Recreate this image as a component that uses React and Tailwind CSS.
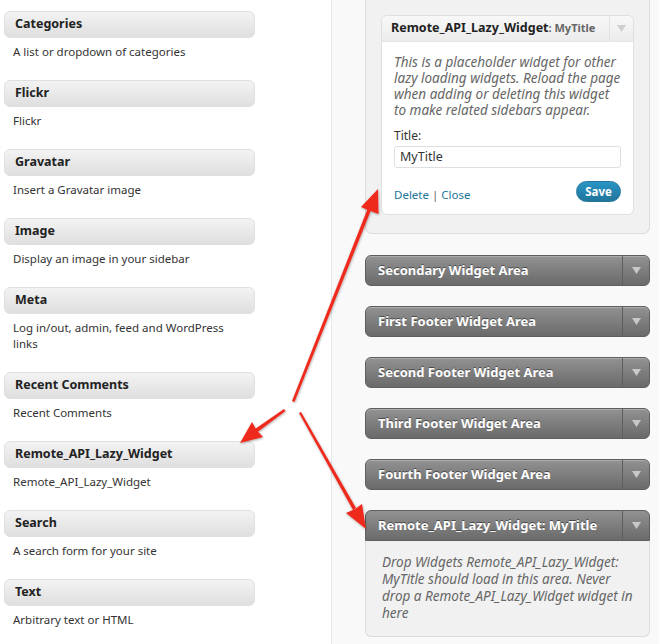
import React from "react";

const leftWidgets = [
  { t: "Categories", d: ["A list or dropdown of categories"] },
  { t: "Flickr", d: ["Flickr"] },
  { t: "Gravatar", d: ["Insert a Gravatar image"] },
  { t: "Image", d: ["Display an image in your sidebar"] },
  { t: "Meta", d: ["Log in/out, admin, feed and WordPress", "links"] },
  { t: "Recent Comments", d: ["Recent Comments"] },
  { t: "Remote_API_Lazy_Widget", d: ["Remote_API_Lazy_Widget"] },
  { t: "Search", d: ["A search form for your site"] },
  { t: "Text", d: ["Arbitrary text or HTML"] },
];

const bars = [
  "Secondary Widget Area",
  "First Footer Widget Area",
  "Second Footer Widget Area",
  "Third Footer Widget Area",
  "Fourth Footer Widget Area",
];

function Tri({ className }) {
  return (
    <svg width="9" height="7" viewBox="0 0 9 7" className={className}>
      <polygon points="0,0 9,0 4.5,7" fill="currentColor" />
    </svg>
  );
}

function DarkBar({ title }) {
  return (
    <div className="flex h-[31px] rounded-[6px] border border-[#5f5f5f] bg-gradient-to-b from-[#929292] to-[#6a6a6a] shadow-[inset_0_1px_0_rgba(255,255,255,0.25)]">
      <div className="flex flex-1 items-center pl-[12px] text-[13px] font-bold text-white [text-shadow:0_-1px_0_rgba(0,0,0,0.45)]">
        {title}
      </div>
      <div className="flex w-[27px] items-center justify-center border-l border-[#5e5e5e] text-[#c8c8c8]">
        <Tri />
      </div>
    </div>
  );
}

export default function App() {
  return (
    <div className="relative flex h-[644px] w-[659px] overflow-hidden bg-white font-['Noto_Sans',sans-serif]">
      {/* left column */}
      <div className="w-[332px] shrink-0 border-r border-[#e6e6e6] bg-white pl-[4px] pt-[11px]">
        {leftWidgets.map((w) => (
          <div key={w.t} className="mb-[20px] w-[251px]">
            <div className="flex h-[27px] items-center rounded-[6px] border border-[#e0e0e0] bg-gradient-to-b from-[#f3f3f3] to-[#dfdfdf] pl-[10px] text-[12.5px] font-bold text-[#222]">
              {w.t}
            </div>
            <div className="mt-[6px] pl-[9px] text-[11.5px] leading-[16px] text-[#333]">
              {w.d.map((l) => (
                <div key={l}>{l}</div>
              ))}
            </div>
          </div>
        ))}
      </div>

      {/* right column */}
      <div className="flex-1 bg-[#f9f9f9] pl-[33px] pr-[9px]">
        <div className="-mt-[10px] rounded-b-[7px] border border-t-0 border-[#dcdcdc] bg-[#f1f1f1] px-[15px] pb-[18px] pt-[25px]">
          <div className="rounded-[6px] border border-[#dfdfdf] bg-white">
            <div className="flex h-[26px] rounded-t-[6px] border-b border-[#e6e6e6] bg-gradient-to-b from-[#f8f8f8] to-[#ececec]">
              <div className="flex flex-1 items-center pl-[9px] text-[12.5px] font-bold text-[#222]">
                Remote_API_Lazy_Widget<span className="text-[11px] text-[#666]">: MyTitle</span>
              </div>
              <div className="flex w-[24px] items-center justify-center border-l border-[#e2e2e2] text-[#cfcfcf]">
                <Tri />
              </div>
            </div>
            <div className="px-[12px] pb-[11px] pt-[12px]">
              <div className="text-[13.5px] italic leading-[16px] text-[#666]">
                This is a placeholder widget for other lazy loading widgets. Reload the page when adding or deleting this widget to make related sidebars appear.
              </div>
              <div className="mt-[10px] text-[12px] leading-[16px] text-[#333]">Title:</div>
              <div className="mt-[2px] flex h-[22px] items-center rounded-[3px] border border-[#dfdfdf] bg-white pl-[5px] text-[12.5px] text-[#333]">
                MyTitle
              </div>
              <div className="mt-[12px] flex items-center justify-between">
                <div className="pt-[6px] text-[11.5px] text-[#21759b]">
                  Delete <span className="text-[#666]">|</span> Close
                </div>
                <div className="flex h-[21px] w-[45px] items-center justify-center rounded-full border border-[#21759b] bg-gradient-to-b from-[#2a95c5] to-[#21759b] text-[11.5px] font-bold text-white">
                  Save
                </div>
              </div>
            </div>
          </div>
        </div>

        <div className="mt-[21px] flex flex-col gap-[20px]">
          {bars.map((b) => (
            <DarkBar key={b} title={b} />
          ))}
          <div>
            <div className="flex h-[31px] rounded-t-[6px] border border-[#5f5f5f] bg-gradient-to-b from-[#929292] to-[#6a6a6a]">
              <div className="flex flex-1 items-center pl-[12px] text-[13px] font-bold text-white [text-shadow:0_-1px_0_rgba(0,0,0,0.45)]">
                Remote_API_Lazy_Widget: MyTitle
              </div>
              <div className="flex w-[27px] items-center justify-center border-l border-[#5e5e5e] text-[#c8c8c8]">
                <Tri />
              </div>
            </div>
            <div className="h-[96px] rounded-b-[6px] border border-t-0 border-[#dcdcdc] bg-[#f1f1f1] pl-[16px] pr-[14px] pt-[13px] text-[13.5px] italic leading-[17px] text-[#666]">
              Drop Widgets Remote_API_Lazy_Widget: MyTitle should load in this area. Never drop a Remote_API_Lazy_Widget widget in here
            </div>
          </div>
        </div>
      </div>

      {/* annotation arrows */}
      <svg className="pointer-events-none absolute left-0 top-0" width="659" height="644" viewBox="0 0 659 644">
        <defs>
          <filter id="sh" x="-20%" y="-20%" width="140%" height="140%">
            <feDropShadow dx="0.5" dy="1" stdDeviation="1" floodColor="#000" floodOpacity="0.35" />
          </filter>
        </defs>
        <g fill="#ee2b1e" filter="url(#sh)">
          <polygon points="292,401 294.5,402 371,210 367.5,209" />
          <polygon points="378,189 378.5,214 369,210.5 361,207" />
          <polygon points="284,409 285.5,411 257.5,432 255,429" />
          <polygon points="240,443 252,422 256.5,430 263,437" />
          <polygon points="299,413 301,412 356,508 353,510" />
          <polygon points="366,529 362,504 355,509 346,513" />
        </g>
      </svg>
    </div>
  );
}
